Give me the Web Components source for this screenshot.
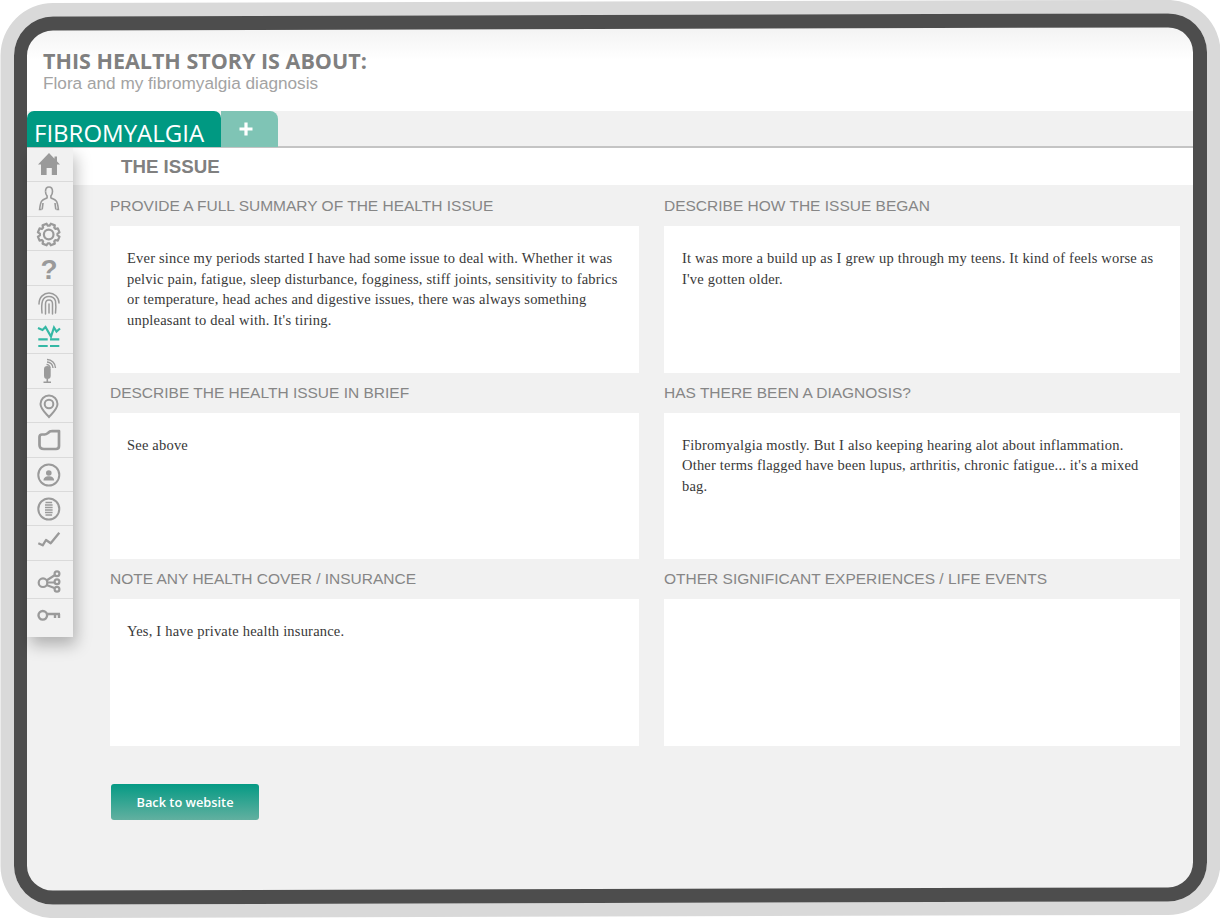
<!DOCTYPE html>
<html lang="en"><head><meta charset="utf-8"><title>Health story</title>
<style>html,body{margin:0;padding:0;background:#fff}body{width:1220px;height:918px;overflow:hidden}</style></head>
<body>
<hs-device>
  <hs-header title-text="THIS HEALTH STORY IS ABOUT:" sub="Flora and my fibromyalgia diagnosis"></hs-header>
  <hs-tabs label="FIBROMYALGIA"></hs-tabs>
  <hs-body>
    <hs-sidebar></hs-sidebar>
    <hs-content heading="THE ISSUE">
      <hs-field label="PROVIDE A FULL SUMMARY OF THE HEALTH ISSUE">Ever since my periods started I have had some issue to deal with. Whether it was<br>pelvic pain, fatigue, sleep disturbance, fogginess, stiff joints, sensitivity to fabrics<br>or temperature, head aches and digestive issues, there was always something<br>unpleasant to deal with. It's tiring.</hs-field>
      <hs-field style="--pl:18px" label="DESCRIBE HOW THE ISSUE BEGAN">It was more a build up as I grew up through my teens. It kind of feels worse as<br>I've gotten older.</hs-field>
      <hs-field label="DESCRIBE THE HEALTH ISSUE IN BRIEF">See above</hs-field>
      <hs-field style="--pl:18px" label="HAS THERE BEEN A DIAGNOSIS?">Fibromyalgia mostly. But I also keeping hearing alot about inflammation.<br>Other terms flagged have been lupus, arthritis, chronic fatigue... it's a mixed<br>bag.</hs-field>
      <hs-field label="NOTE ANY HEALTH COVER / INSURANCE">Yes, I have private health insurance.</hs-field>
      <hs-field style="--pl:18px" label="OTHER SIGNIFICANT EXPERIENCES / LIFE EVENTS"></hs-field>
      <hs-button slot="after">Back to website</hs-button>
    </hs-content>
  </hs-body>
</hs-device>
<script>
function def(name, html){
  customElements.define(name, class extends HTMLElement{
    constructor(){super();this.attachShadow({mode:'open'}).innerHTML=typeof html==='function'?html(this):html;}
  });
}
def('hs-device',`<style>
:host{display:block;position:relative;box-sizing:border-box;width:1220px;height:918px;padding:20px}
.screen{width:1180px;height:878px;background:#f1f1f1;display:flex;flex-direction:column;overflow:hidden}
.frame{position:absolute;left:14px;top:15.3px;width:1193px;height:888px;box-sizing:border-box;border:14.3px solid #4d4d4d;border-left-width:13.5px;border-right-width:14.5px;border-radius:39px;box-shadow:0 0 0 13.5px #d9d9d9;transform:skewY(-.16deg);pointer-events:none}
</style><div class="screen"><slot></slot></div><div class="frame"></div>`);
def('hs-header',h=>`<style>
:host{display:block;height:91px;box-sizing:border-box;padding:28px 0 0 23px;background:linear-gradient(#f3f3f3 8px,#fff 40px)}
h1{margin:0;font:700 21.5px/26px "Open Sans",sans-serif;color:#808080}
p{margin:-1px 0 0;font:17.2px/20px "Liberation Sans",sans-serif;color:#a3a3a3}
</style><h1>${h.getAttribute('title-text')}</h1><p>${h.getAttribute('sub')}</p>`);
def('hs-tabs',h=>`<style>
:host{display:flex;height:37px;box-sizing:border-box;padding-left:7px;background:#f1f1f1;border-bottom:2px solid #c4c4c4}
.a{width:194px;height:36px;margin-bottom:-1px;box-sizing:border-box;padding:7px 0 0 7px;background:#009982;border-radius:7px 7px 0 0;font:24px/30px "Open Sans",sans-serif;color:#fff;white-space:nowrap}
.b{width:57px;height:36px;margin-bottom:-1px;background:#7fc4b5;border-radius:0 8px 0 0;display:flex;justify-content:center;padding:10px 8px 0 0;box-sizing:border-box}
</style><div class="a">${h.getAttribute('label')}</div><div class="b"><svg width="16" height="16" viewBox="0 0 16 16"><path d="M8 1.500v13M1.500 8h13" stroke="#fff" stroke-width="3.2" fill="none"/></svg></div>`);
def('hs-body',`<style>:host{display:flex;flex:1;align-items:flex-start;padding-left:7px;min-height:0}</style><slot></slot>`);

const g='#9a9a9a';
function gearPath(cx,cy){
  let d='',n=8;
  for(let i=0;i<n;i++){
    const a=i*2*Math.PI/n+Math.PI/8, s=.27, t=.2;
    const pts=[[8.8,a-s-.02],[11,a-t],[11,a+t],[8.8,a+s+.02]];
    pts.forEach((p,j)=>{const x=(cx+p[0]*Math.cos(p[1])).toFixed(2),y=(cy+p[0]*Math.sin(p[1])).toFixed(2);
      d+=(i===0&&j===0?'M':(j===0?'A8.8 8.8 0 0 1 ':'L'))+x+' '+y;});
  }
  const a=Math.PI/8-.29;
  return d+'A8.8 8.8 0 0 1 '+(cx+8.8*Math.cos(a)).toFixed(2)+' '+(cy+8.8*Math.sin(a)).toFixed(2)+'Z';
}
const icons=[
 [34,`<path fill="${g}" d="M22 5 33 16.6H30V27H24.800V20H19.600V27H14V16.600H11ZM27.500 8.500h2.500v5l-2.500-2.500Z"/>`],
 [35,`<g fill="none" stroke="${g}" stroke-width="1.600"><path d="M18.500 9.500c0-3 1.600-4.500 3.500-4.500s3.500 1.500 3.500 4.500c0 2.400-1 3.800-1.600 4.600v1.600c.6.9 3.500 1.400 5.100 3 1.400 1.500 2 5 2.400 8.800h-2"/><path d="M18.500 9.500c0 2.400 1 3.800 1.600 4.600v1.600c-.6.9-3.500 1.400-5.100 3-1.400 1.500-2 5-2.400 8.800h2"/><path d="M16 21l-.8 6.500M28 21l.8 6.500"/></g>`],
 [34,`<path fill="none" stroke="${g}" stroke-width="2.200" stroke-linejoin="round" d="${gearPath(21.700,17.500)}"/><circle cx="21.700" cy="17.500" r="4.800" fill="none" stroke="${g}" stroke-width="2.200"/>`],
 [35,`<text x="22" y="27.500" text-anchor="middle" font-family="Liberation Sans" font-weight="700" font-size="28" fill="${g}">?</text>`],
 [34,`<g fill="none" stroke="${g}" stroke-width="1.500" stroke-linecap="round"><path d="M12 18C12 11 17 7 22 7s10 4 10 10"/><path d="M15 27c-.5-5-.5-9 .5-12 1-3 3.500-4.500 6.500-4.500s5.500 1.500 6.500 4.500c.5 4 .5 8 0 12"/><path d="M18.500 28V18c0-2.500 1.500-4 3.500-4s3.500 1.500 3.500 4v10"/><path d="M22 18v9"/></g>`],
 [34,`<g fill="none" stroke="#35b8a5" stroke-width="2.200"><path d="M11 8l4.500 2 3-3 5.500 9.500 3-9 2.500 4 3.500-3"/><path d="M11.300 19.300h9.400M23 19.300h9.300M11.300 26h9.400M23 26h9.300"/></g>`],
 [35,`<rect x="17" y="12" width="6.700" height="13" rx="3.300" fill="${g}"/><path d="M20.300 25v3M16.500 28.300h7.500" stroke="${g}" stroke-width="1.600" fill="none"/><g fill="none" stroke="${g}" stroke-width="1.400"><path d="M19.500 10.500a3.500 3.500 0 0 1 3.500 3.500M20 8a6 6 0 0 1 6 6M20 5.500a8.500 8.500 0 0 1 8.500 8.500"/></g>`],
 [34,`<path fill="none" stroke="${g}" stroke-width="2" d="M22 28c-3-3.500-8.500-8-8.500-13a8.500 8.500 0 0 1 17 0c0 5-5.500 9.500-8.500 13Z"/><circle cx="22" cy="15" r="4.300" fill="none" stroke="${g}" stroke-width="2"/>`],
 [35,`<path fill="none" stroke="${g}" stroke-width="2.700" stroke-linejoin="round" d="M12.500 14c0-1.500 1-2.500 2.500-2.500h2.500c1.500 0 2.500-.7 3.500-1.500 1-1 2-1.800 3.500-1.800L32 8v15c0 2-1 3-3 3H17c-3 0-4.500-1.500-4.500-4Z"/>`],
 [34,`<circle cx="21.800" cy="17" r="10.500" fill="none" stroke="${g}" stroke-width="2"/><circle cx="21.800" cy="15" r="2.800" fill="${g}"/><path fill="${g}" d="M16.500 22.500c0-2.800 2.300-4.200 5.300-4.200s5.300 1.400 5.300 4.200Z"/>`],
 [34,`<circle cx="21.800" cy="17" r="10.500" fill="none" stroke="${g}" stroke-width="2"/><path stroke="${g}" stroke-width="1.300" fill="none" d="M18.500 10.500h6.600M18 13h7.600M18 15.500h7.600M18 18h7.600M18 20.500h7.600M18.500 23h6.600"/>`],
 [35,`<path fill="none" stroke="${g}" stroke-width="2.300" stroke-linejoin="round" d="M11.300 17.300l4.400 2L19 14l4.700 3.300 8.600-10.600"/>`],
 [38,`<g fill="none" stroke="${g}" stroke-width="2.200"><circle cx="16" cy="21.700" r="4.300"/><circle cx="30" cy="12.700" r="2.400"/><circle cx="30" cy="20.700" r="2.400"/><circle cx="30" cy="28.300" r="2.400"/><path d="M19.500 19.500l8.500-5.500M20.300 21.500h7.300M19.500 24l8.600 3.300"/></g>`],
 [38,`<g fill="none" stroke="${g}" stroke-width="2.400"><circle cx="15.800" cy="16.300" r="4.300"/><path d="M20 15H33M28 15v4M32 15v4"/></g>`],
];
def('hs-sidebar',`<style>
:host{display:block;width:46px;flex:none;background:#f1f1f1;box-shadow:3px 8px 16px rgba(0,0,0,.27);position:relative;z-index:1;height:489px}
div{width:46px;box-sizing:border-box;border-bottom:1.500px solid #dadada}
div:last-child{border-bottom:0}
svg{display:block;overflow:visible}
</style>`+icons.map(([h,s])=>`<div style="height:${h}px"><svg width="46" height="${h-2}" viewBox="0 0 46 ${h-2}">${s}</svg></div>`).join(''));
def('hs-content',h=>`<style>
:host{display:block;flex:1;min-width:0}
h2{margin:0;height:37px;padding-left:48px;background:#fff;font:700 18.7px/37px "Liberation Sans",sans-serif;color:#808080}
.grid{display:grid;grid-template-columns:529px 516px;column-gap:25px;grid-auto-rows:186.67px;padding:1px 0 0 37px}
.after{padding:38px 0 0 38px}
</style><h2>${h.getAttribute('heading')}</h2><div class="grid"><slot></slot></div><div class="after"><slot name="after"></slot></div>`);
def('hs-field',h=>`<style>
:host{display:grid;grid-template-rows:40px 1fr;min-height:0}
.l{font:15.5px/40px "Liberation Sans",sans-serif;color:#868686;white-space:nowrap}
.c{background:#fff;box-sizing:border-box;padding:22px 17px 0 var(--pl,17px);font:14.5px/20.700px "Liberation Serif",serif;color:#383838;white-space:nowrap;letter-spacing:.2px}
</style><div class="l">${h.getAttribute('label')}</div><div class="c"><slot></slot></div>`);
def('hs-button',`<style>
:host{display:flex;align-items:center;justify-content:center;width:148px;height:36px;border-radius:3px;background:linear-gradient(#059a84,#62b0a0);color:#fff;font:600 12.8px "Open Sans",sans-serif}
</style><slot></slot>`);
</script>
</body></html>
